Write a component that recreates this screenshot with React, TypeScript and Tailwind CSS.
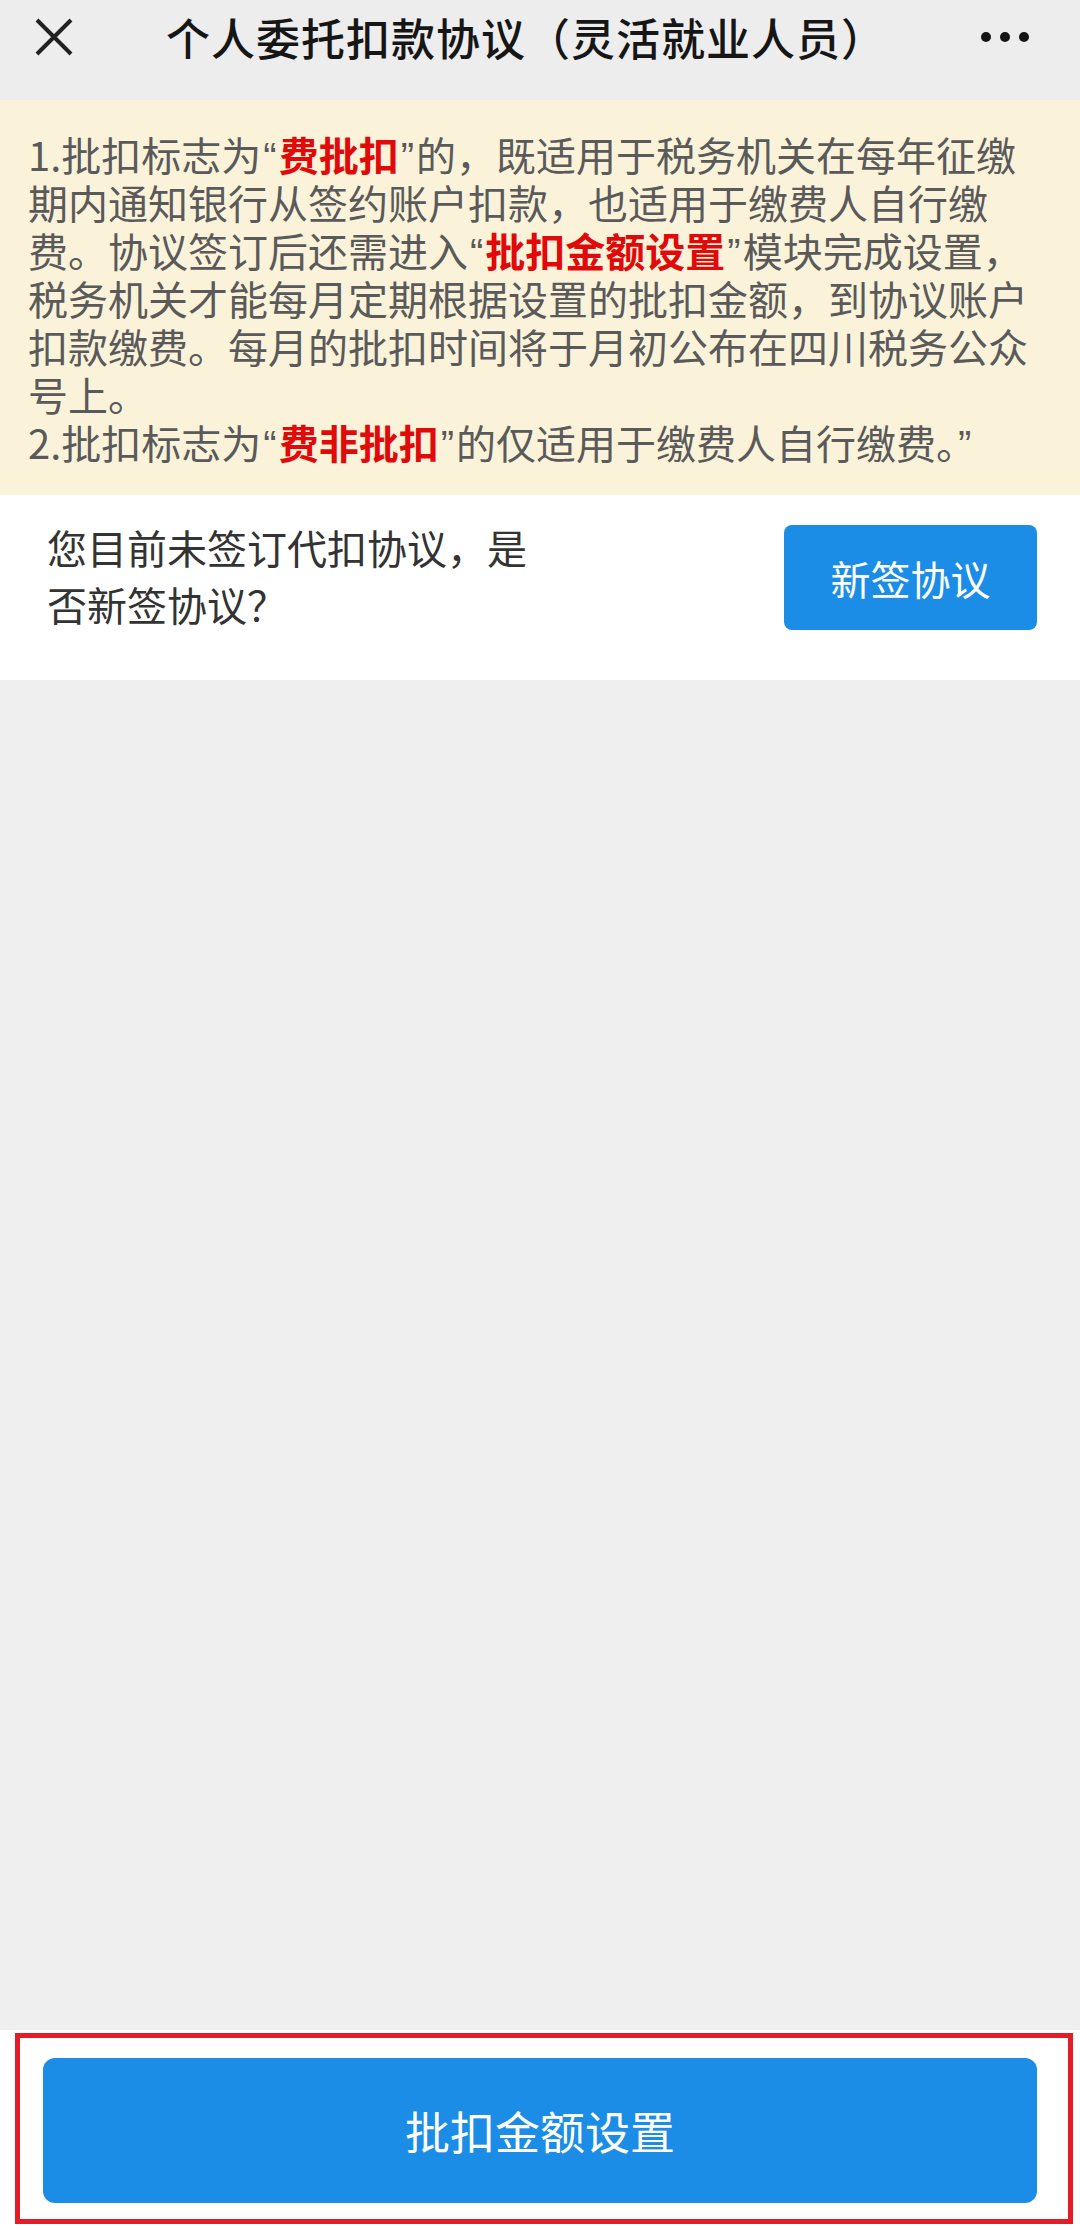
import React from "react";

const font = { fontFamily: '"Noto Sans CJK SC", "Noto Sans", sans-serif' };

function Red({ children }: { children: React.ReactNode }) {
  return <span className="text-[#e10a0a] font-bold">{children}</span>;
}

function Q({ c }: { c: string }) {
  return <span className="font-['Liberation_Sans',sans-serif] leading-[0] px-[2px]">{c}</span>;
}

function Line({ children }: { children: React.ReactNode }) {
  return <div className="h-[48px]">{children}</div>;
}

export default function App() {
  return (
    <div
      className="w-[1080px] h-[2230px] flex flex-col bg-[#efefef] overflow-hidden"
      style={font}
    >
      {/* Header */}
      <div className="h-[100px] shrink-0 bg-[#ededed]">
        <div className="h-[73px] flex items-center pl-[35px] pr-[51px]">
          <svg width="38" height="38" viewBox="0 0 38 38" className="shrink-0">
            <path d="M2 2 L36 36 M36 2 L2 36" stroke="#222" strokeWidth="4" strokeLinecap="butt" />
          </svg>
          <div className="ml-[93px] text-[44px] leading-none text-[#161616] font-medium tracking-[1px] whitespace-nowrap">
            个人委托扣款协议（灵活就业人员）
          </div>
          <div className="flex-1" />
          <div className="flex items-center gap-[9px]">
            <span className="w-[10px] h-[10px] rounded-full bg-[#161616]" />
            <span className="w-[10px] h-[10px] rounded-full bg-[#161616]" />
            <span className="w-[10px] h-[10px] rounded-full bg-[#161616]" />
          </div>
        </div>
      </div>

      {/* Notice */}
      <div className="shrink-0 bg-[#faf3da] pl-[28px] pr-[20px] pt-[30px] pb-[29px] text-[40px] leading-[48px] text-[#5a5a5a] whitespace-nowrap">
        <Line>
          1.批扣标志为<Q c="“" /><Red>费批扣</Red><Q c="”" />的，既适用于税务机关在每年征缴
        </Line>
        <Line>期内通知银行从签约账户扣款，也适用于缴费人自行缴</Line>
        <Line>
          费。协议签订后还需进入<Q c="“" /><Red>批扣金额设置</Red><Q c="”" />模块完成设置，
        </Line>
        <Line>税务机关才能每月定期根据设置的批扣金额，到协议账户</Line>
        <Line>扣款缴费。每月的批扣时间将于月初公布在四川税务公众</Line>
        <Line>号上。</Line>
        <Line>
          2.批扣标志为<Q c="“" /><Red>费非批扣</Red><Q c="”" />的仅适用于缴费人自行缴费。<Q c="”" />
        </Line>
      </div>

      {/* Sign section */}
      <div className="shrink-0 h-[185px] bg-white flex items-start pl-[47px] pr-[43px]">
        <div className="pt-[24px] text-[40px] leading-[57px] text-[#333333]">
          <div>您目前未签订代扣协议，是</div>
          <div>否新签协议？</div>
        </div>
        <div className="flex-1" />
        <button className="mt-[30px] w-[253px] h-[105px] rounded-[8px] bg-[#1b8de6] text-white text-[40px] leading-none flex items-center justify-center">
          新签协议
        </button>
      </div>

      <div className="flex-1" />

      {/* Bottom bar */}
      <div className="shrink-0 h-[200px] bg-white relative pl-[43px] pr-[43px] pt-[28px]">
        <button className="w-full h-[145px] rounded-[12px] bg-[#1b8de6] text-white text-[45px] leading-none flex items-center justify-center">
          批扣金额设置
        </button>
        <div className="absolute left-[15px] top-[3px] w-[1058px] h-[191px] border-[5px] border-[#e31c25] pointer-events-none" />
      </div>
    </div>
  );
}
